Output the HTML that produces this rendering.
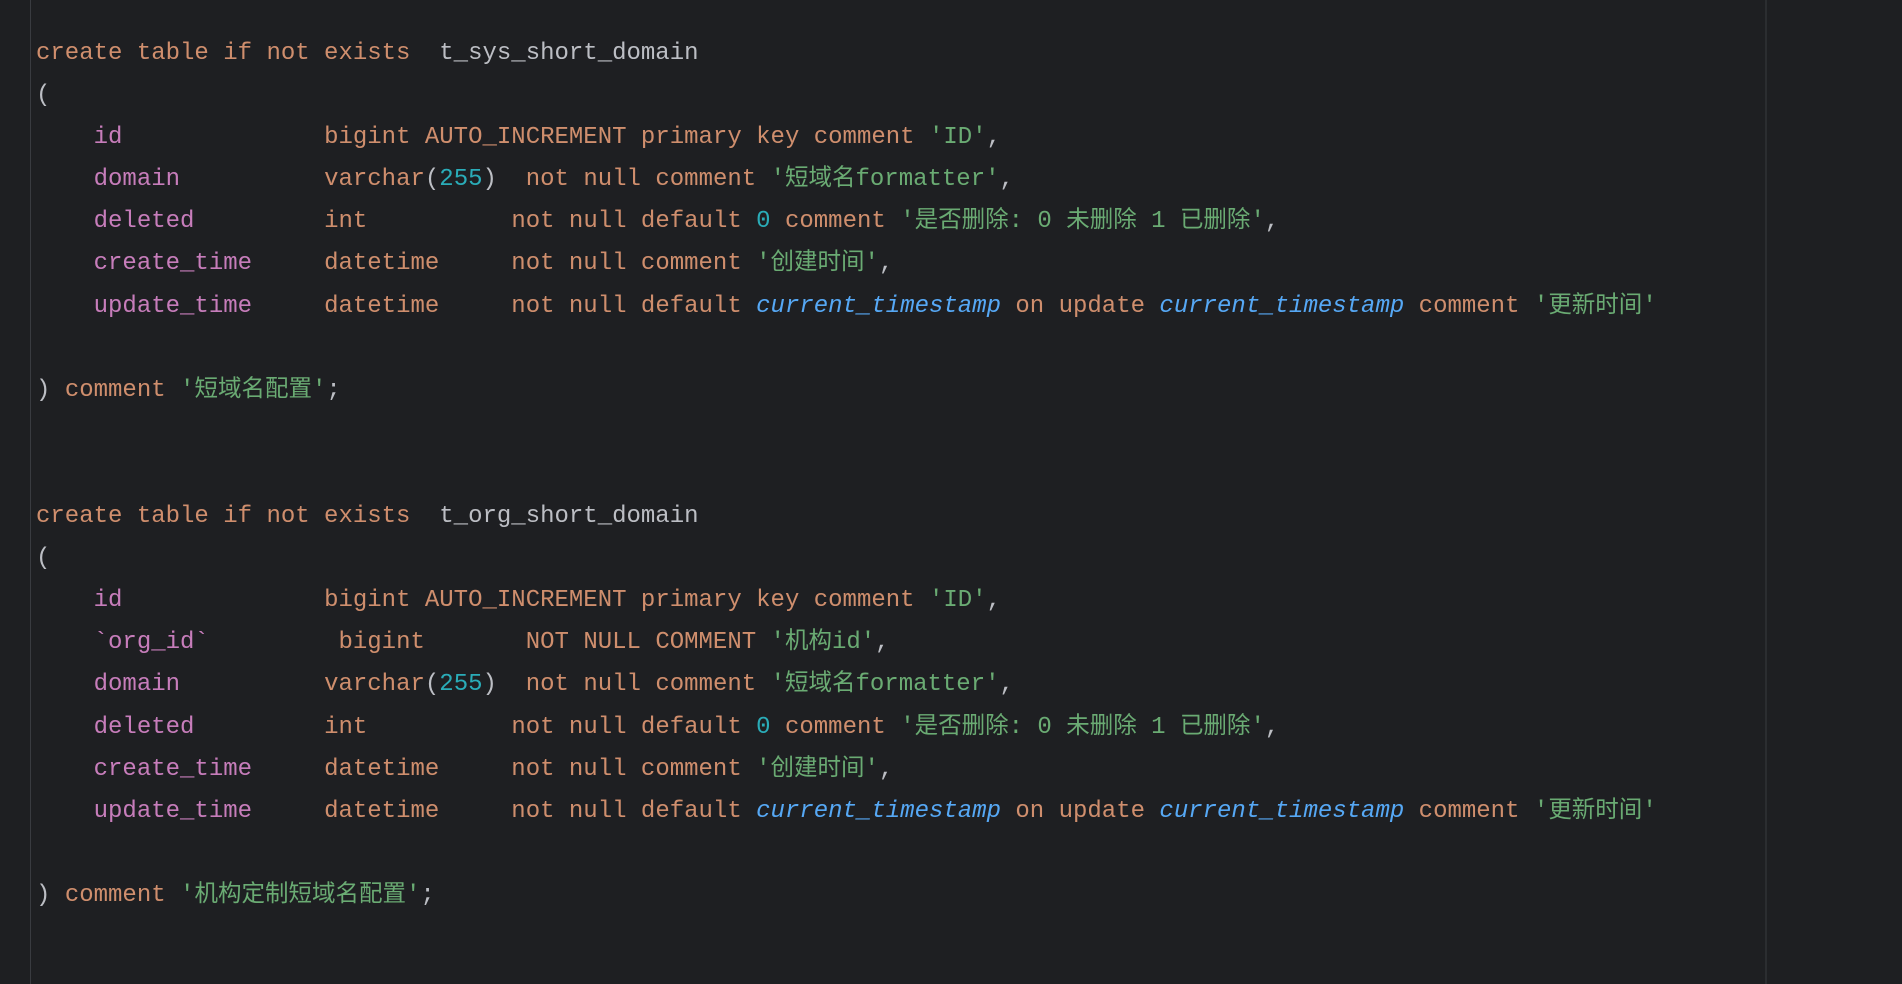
<!DOCTYPE html>
<html><head><meta charset="utf-8"><style>
html,body{margin:0;background:#1e1f22;width:1902px;height:984px;overflow:hidden}
.g{position:absolute;left:30px;top:0;width:1px;height:984px;background:#393b40}
.r{position:absolute;left:1765px;top:0;width:2px;height:984px;background:#2b2d30}
pre{position:absolute;left:36px;top:33px;margin:0;font-family:"Liberation Mono","Noto Sans CJK SC",monospace;font-size:24px;line-height:42.1px;color:#bcbec4}
.k{color:#cf8e6d}.p{color:#c77dbb}.s{color:#6aab73}.n{color:#2aacb8}.i{color:#56a8f5;font-style:italic}
.c{font-size:23.5px;line-height:0;font-family:"Noto Sans CJK SC",sans-serif}
</style></head><body><div class="g"></div><div class="r"></div>
<pre><span class="k">create table if not exists</span>  t_sys_short_domain
(
    <span class="p">id</span>              <span class="k">bigint AUTO_INCREMENT primary key comment</span> <span class="s">'ID'</span>,
    <span class="p">domain</span>          <span class="k">varchar</span>(<span class="n">255</span>)  <span class="k">not null comment</span> <span class="s">'<span class="c">短域名</span>formatter'</span>,
    <span class="p">deleted</span>         <span class="k">int</span>          <span class="k">not null default</span> <span class="n">0</span> <span class="k">comment</span> <span class="s">'<span class="c">是否删除</span>: 0 <span class="c">未删除</span> 1 <span class="c">已删除</span>'</span>,
    <span class="p">create_time</span>     <span class="k">datetime</span>     <span class="k">not null comment</span> <span class="s">'<span class="c">创建时间</span>'</span>,
    <span class="p">update_time</span>     <span class="k">datetime</span>     <span class="k">not null default</span> <span class="i">current_timestamp</span> <span class="k">on update</span> <span class="i">current_timestamp</span> <span class="k">comment</span> <span class="s">'<span class="c">更新时间</span>'</span>

) <span class="k">comment</span> <span class="s">'<span class="c">短域名配置</span>'</span>;


<span class="k">create table if not exists</span>  t_org_short_domain
(
    <span class="p">id</span>              <span class="k">bigint AUTO_INCREMENT primary key comment</span> <span class="s">'ID'</span>,
    <span class="p">`org_id`</span>         <span class="k">bigint</span>       <span class="k">NOT NULL COMMENT</span> <span class="s">'<span class="c">机构</span>id'</span>,
    <span class="p">domain</span>          <span class="k">varchar</span>(<span class="n">255</span>)  <span class="k">not null comment</span> <span class="s">'<span class="c">短域名</span>formatter'</span>,
    <span class="p">deleted</span>         <span class="k">int</span>          <span class="k">not null default</span> <span class="n">0</span> <span class="k">comment</span> <span class="s">'<span class="c">是否删除</span>: 0 <span class="c">未删除</span> 1 <span class="c">已删除</span>'</span>,
    <span class="p">create_time</span>     <span class="k">datetime</span>     <span class="k">not null comment</span> <span class="s">'<span class="c">创建时间</span>'</span>,
    <span class="p">update_time</span>     <span class="k">datetime</span>     <span class="k">not null default</span> <span class="i">current_timestamp</span> <span class="k">on update</span> <span class="i">current_timestamp</span> <span class="k">comment</span> <span class="s">'<span class="c">更新时间</span>'</span>

) <span class="k">comment</span> <span class="s">'<span class="c">机构定制短域名配置</span>'</span>;
</pre></body></html>
